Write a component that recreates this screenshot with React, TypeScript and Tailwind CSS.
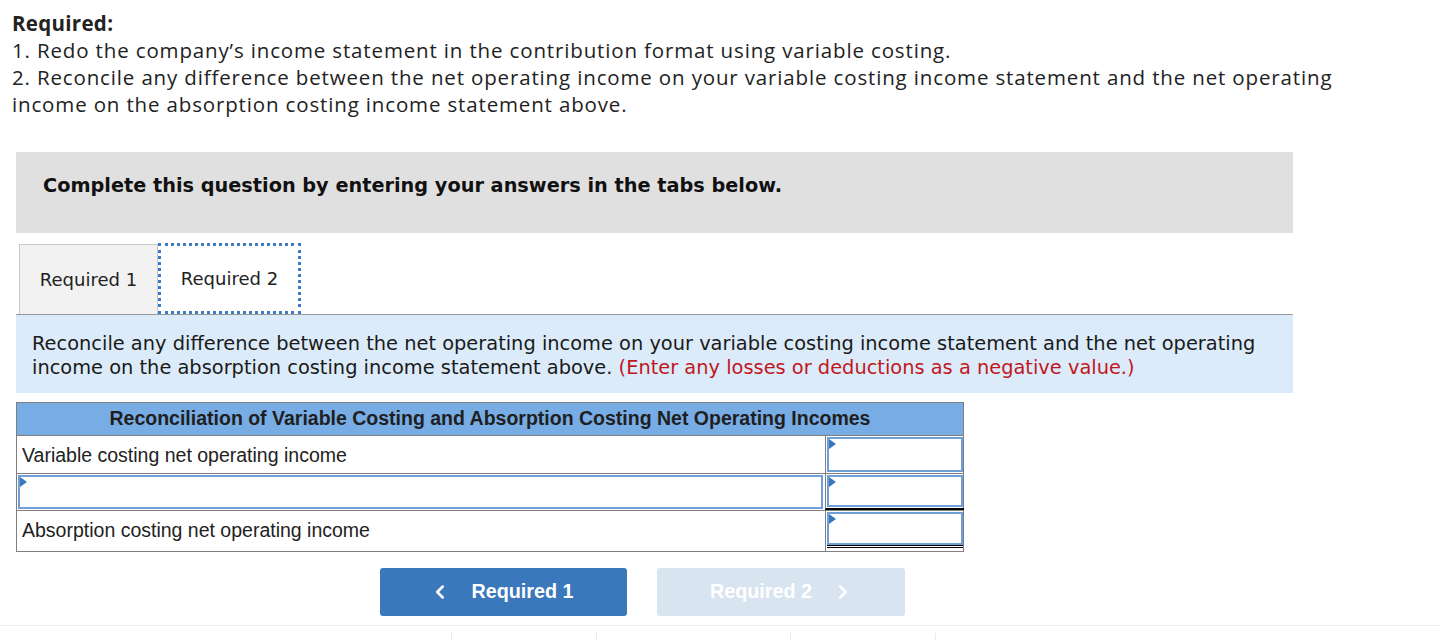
import { ChevronLeft, ChevronRight } from "lucide-react";

const proxima = { fontFamily: '"Open Sans", "Lato", sans-serif' };
const verdana = { fontFamily: '"DejaVu Sans", Verdana, sans-serif' };
const arial = { fontFamily: '"Liberation Sans", Arial, sans-serif' };

function Marker() {
  return (
    <span className="absolute left-0 top-0 h-0 w-0 border-y-[5px] border-l-[7px] border-y-transparent border-l-[#3a78bb]" />
  );
}

function InputCell({ className = "" }: { className?: string }) {
  return (
    <div className={`relative h-full w-full border-2 border-[#6e9fd8] bg-white ${className}`}>
      <Marker />
    </div>
  );
}

export default function App() {
  return (
    <div className="relative h-[640px] w-[1441px] overflow-hidden bg-white text-[#1a1a1a]">
      <div className="pl-[12px] pt-[10px] text-[20.5px] leading-[27px] tracking-[0.85px] text-[#222]" style={proxima}>
        <p className="font-bold tracking-[0.3px]">Required:</p>
        <p>1. Redo the company’s income statement in the contribution format using variable costing.</p>
        <p className="w-[1360px]">
          2. Reconcile any difference between the net operating income on your variable costing income statement and the net operating
          income on the absorption costing income statement above.
        </p>
      </div>

      <div className="ml-[16px] mt-[34px] h-[81px] w-[1277px] bg-[#e0e0e0] pl-[27px] pt-[20px]">
        <p className="text-[19.3px] font-bold leading-[28px] text-[#111]" style={verdana}>
          Complete this question by entering your answers in the tabs below.
        </p>
      </div>

      <div className="ml-[16px] mt-[10px] w-[1277px]" style={verdana}>
        <div className="flex h-[71px] items-end pl-[3px]">
          <div className="flex h-[70px] w-[139px] items-center justify-center border border-b-0 border-[#c8c8c8] bg-[#f2f2f2] text-[18px] text-[#222]">
            Required 1
          </div>
          <div className="flex h-[71px] w-[143px] items-center justify-center border-[3px] border-dotted border-[#3d7cc4] bg-white text-[18px] text-[#222]">
            Required 2
          </div>
        </div>
        <div className="border-t border-[#999] bg-[#dbebf9] px-[16px] pb-[13px] pt-[17px] text-[19.4px] leading-[24px] text-[#1a1a1a]">
          Reconcile any difference between the net operating income on your variable costing income statement and the net operating income on the absorption costing income statement above.{" "}
          <span className="text-[#c0171d]">(Enter any losses or deductions as a negative value.)</span>
        </div>
      </div>

      <div className="ml-[16px] mt-[9px] w-[948px] border border-[#7f7f7f]" style={arial}>
        <div className="flex h-[33px] items-center justify-center border-b border-[#7f7f7f] bg-[#78ace4] text-[19.5px] font-bold text-[#1f1f1f]">
          Reconciliation of Variable Costing and Absorption Costing Net Operating Incomes
        </div>
        <div className="grid h-[38px] grid-cols-[808px_139px] border-b border-[#7f7f7f]">
          <div className="flex items-center pl-[5px] pt-[2px] text-[19.5px] text-[#222]">Variable costing net operating income</div>
          <div className="border-l border-[#7f7f7f] p-px">
            <InputCell />
          </div>
        </div>
        <div className="grid h-[37px] grid-cols-[808px_139px] border-b border-[#7f7f7f]">
          <div className="p-px pr-[2px]">
            <InputCell />
          </div>
          <div className="border-b-2 border-l border-b-black border-l-[#7f7f7f] p-px">
            <InputCell />
          </div>
        </div>
        <div className="grid h-[40px] grid-cols-[808px_139px]">
          <div className="flex items-center pl-[5px] text-[19.5px] text-[#222]">Absorption costing net operating income</div>
          <div className="border-l border-[#7f7f7f] px-px pt-px">
            <div className="h-[36px] border-b-[3px] border-double border-black">
              <InputCell />
            </div>
          </div>
        </div>
      </div>

      <div className="ml-[380px] mt-[16px] flex gap-[30px]" style={arial}>
        <button className="flex h-[48px] w-[247px] items-center justify-center gap-[20px] rounded-[3px] bg-[#3a77bb] pr-[4px] text-[19.8px] font-bold text-white">
          <ChevronLeft className="h-[22px] w-[22px]" strokeWidth={2.8} />
          <span>Required 1</span>
        </button>
        <button className="flex h-[48px] w-[248px] items-center justify-center gap-[20px] rounded-[3px] bg-[#d9e4f1] pl-[2px] text-[19.8px] font-bold text-white">
          <span>Required 2</span>
          <ChevronRight className="h-[22px] w-[22px]" strokeWidth={2.8} />
        </button>
      </div>

      <div className="mt-[9px] border-t border-[#ececec]">
        <div className="relative h-[15px]">
          <span className="absolute left-[451px] top-[7px] h-[8px] w-px bg-[#e8e8e8]" />
          <span className="absolute left-[596px] top-[7px] h-[8px] w-px bg-[#e8e8e8]" />
          <span className="absolute left-[790px] top-[7px] h-[8px] w-px bg-[#e8e8e8]" />
          <span className="absolute left-[935px] top-[7px] h-[8px] w-px bg-[#e8e8e8]" />
        </div>
      </div>
    </div>
  );
}
